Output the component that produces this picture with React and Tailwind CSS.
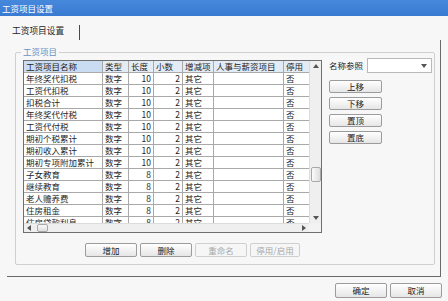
import React from "react";

// 工资项目设置 dialog

const rows = [
  ["年终奖代扣税", "10"],
  ["工资代扣税", "10"],
  ["扣税合计", "10"],
  ["年终奖代付税", "10"],
  ["工资代付税", "10"],
  ["期初个税累计", "10"],
  ["期初收入累计", "10"],
  ["期初专项附加累计", "10"],
  ["子女教育", "8"],
  ["继续教育", "8"],
  ["老人赡养费", "8"],
  ["住房租金", "8"],
  ["住房贷款利息", "8"],
];

const cols = [
  { title: "工资项目名称", w: "w-[79px]" },
  { title: "类型", w: "w-[26px]" },
  { title: "长度", w: "w-[25px]" },
  { title: "小数", w: "w-[29px]" },
  { title: "增减项", w: "w-[31px]" },
  { title: "人事与薪资项目", w: "w-[70px]" },
  { title: "停用", w: "w-[26px]" },
];

function Btn({ children, disabled, w = "w-[52px]", h = "h-[14px]" }) {
  return (
    <div
      className={`${w} ${h} shrink-0 flex items-center justify-center rounded-[2px] border ${
        disabled
          ? "border-[#cfcfcf] text-[#a8a8a8] bg-[#f6f6f6]"
          : "border-[#9c9c9c] text-[#222] bg-gradient-to-b from-[#ffffff] to-[#e6e6e6]"
      }`}
    >
      {children}
    </div>
  );
}

function Tri({ dir }) {
  const pts = {
    up: "0,4 3,0 6,4",
    down: "0,0 6,0 3,4",
    left: "4,0 4,6 0,3",
    right: "0,0 0,6 4,3",
  }[dir];
  const vert = dir === "up" || dir === "down";
  return (
    <svg width={vert ? 6 : 4} height={vert ? 4 : 6} viewBox={vert ? "0 0 6 4" : "0 0 4 6"}>
      <polygon points={pts} fill="#555" />
    </svg>
  );
}

function Cell({ w, children, className = "" }) {
  return (
    <div className={`${w} h-full shrink-0 border-r border-b border-[#a9a9a9] px-[2px] flex items-center overflow-hidden whitespace-nowrap ${className}`}>
      {children}
    </div>
  );
}

function Grid() {
  return (
    <div className="w-[299px] h-[173px] shrink-0 border border-[#6f6f6f] bg-white flex flex-col overflow-hidden">
      <div className="flex h-[162px]">
        <div className="w-[285px] h-full overflow-hidden">
          <div className="flex h-[12px]">
            {cols.map((c, i) => (
              <Cell key={c.title} w={c.w} className={i === 0 ? "bg-[#cadcf1]" : "bg-[#e3ebf5]"}>
                {c.title}
              </Cell>
            ))}
          </div>
          {rows.map(([name, len]) => (
            <div key={name} className="flex h-[12px]">
              <Cell w={cols[0].w}>{name}</Cell>
              <Cell w={cols[1].w}>数字</Cell>
              <Cell w={cols[2].w} className="justify-end">{len}</Cell>
              <Cell w={cols[3].w} className="justify-end">2</Cell>
              <Cell w={cols[4].w}>其它</Cell>
              <Cell w={cols[5].w}></Cell>
              <Cell w={cols[6].w}>否</Cell>
            </div>
          ))}
        </div>
        {/* vertical scrollbar */}
        <div className="w-[12px] h-full bg-[#efefef] border-l border-[#dcdcdc] flex flex-col items-center">
          <div className="h-[10px] flex items-center justify-center">
            <Tri dir="up" />
          </div>
          <div className="mt-[96px] w-[10px] h-[15px] rounded-[2px] border border-[#a8a8a8] bg-gradient-to-r from-[#fafafa] to-[#dedede]" />
          <div className="flex-1" />
          <div className="h-[10px] flex items-center justify-center">
            <Tri dir="down" />
          </div>
        </div>
      </div>
      {/* horizontal scrollbar */}
      <div className="flex h-[9px]">
        <div className="w-[285px] h-full bg-[#efefef] border-t border-[#dcdcdc] flex items-center">
          <div className="w-[10px] flex justify-center">
            <Tri dir="left" />
          </div>
          <div className="ml-[3px] w-[11px] h-[8px] rounded-[2px] border border-[#a8a8a8] bg-gradient-to-b from-[#fafafa] to-[#dedede]" />
          <div className="flex-1" />
          <div className="w-[10px] flex justify-center">
            <Tri dir="right" />
          </div>
        </div>
        <div className="w-[12px] h-full bg-[#f3f3f3]" />
      </div>
    </div>
  );
}

export default function App() {
  return (
    <div className="w-[448px] h-[301px] overflow-hidden bg-[#f7f7f7] text-[#1e1e1e] text-[8.5px] leading-[11px] font-['Noto_Sans_CJK_SC',sans-serif] flex flex-col">
      {/* title bar */}
      <div className="h-[16px] shrink-0 bg-gradient-to-b from-[#4688dc] to-[#3a7bd2] text-white text-[8.5px] pl-[2px] flex items-center">
        工资项目设置
      </div>

      {/* tab strip */}
      <div className="h-[24px] shrink-0 flex items-start pl-[12px]">
        <span className="mt-[9px] text-[8.7px] leading-[11px]">工资项目设置</span>
        <div className="ml-[15px] mt-[9px] w-px h-[15px] bg-[#4a4a4a]" />
      </div>

      {/* tab panel */}
      <div className="ml-[7px] w-[434px] h-[237px] shrink-0 border-r border-b border-[#6a6a6a]">
        <div className="relative mt-[12px] ml-[8px] w-[420px] h-[213px] border border-[#cfcfcf] rounded-[2px]">
          <span className="absolute -top-[7px] left-[5px] px-[2px] bg-[#f7f7f7] text-[#6a8fc6]">工资项目</span>

          <div className="flex items-start pl-[7px] pt-[7px]">
            <Grid />
            <div className="ml-[7px] w-[103px]">
              <div className="flex items-center h-[15px] -mt-[2px]">
                <span className="w-[38px] shrink-0">名称参照</span>
                <div className="w-[65px] h-[15px] shrink-0 bg-white border border-[#b9b9b9] flex items-center justify-end pr-[4px]">
                  <Tri dir="down" />
                </div>
              </div>
              <div className="mt-[7px] grid grid-cols-[53px] gap-[4px]">
                <Btn w="w-[53px]" h="h-[13px]">上移</Btn>
                <Btn w="w-[53px]" h="h-[13px]">下移</Btn>
                <Btn w="w-[53px]" h="h-[13px]">置顶</Btn>
                <Btn w="w-[53px]" h="h-[13px]">置底</Btn>
              </div>
            </div>
          </div>

          <div className="mt-[10px] ml-[69px] flex gap-[3px]">
            <Btn>增加</Btn>
            <Btn>删除</Btn>
            <Btn disabled>重命名</Btn>
            <Btn disabled w="w-[50px]">停用/启用</Btn>
          </div>
        </div>
      </div>

      {/* dialog buttons */}
      <div className="mt-[6px] pr-[6px] flex justify-end gap-[3px]">
        <Btn h="h-[15px]">确定</Btn>
        <Btn h="h-[15px]">取消</Btn>
      </div>
    </div>
  );
}
